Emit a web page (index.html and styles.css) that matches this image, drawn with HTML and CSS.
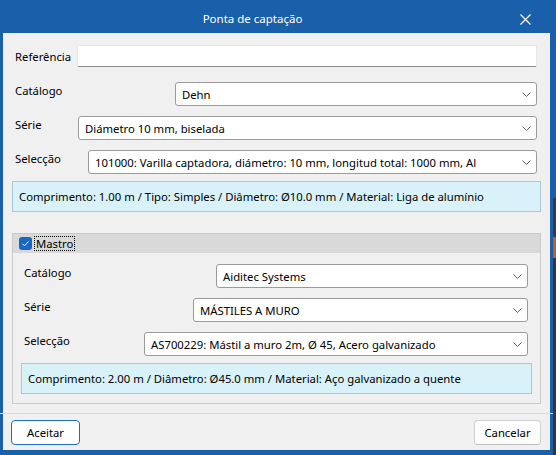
FILE: index.html
```html
<!DOCTYPE html>
<html lang="pt">

<head>
    <meta charset="UTF-8">
    <title>Ponta de captação</title>
    <link rel="stylesheet" href="styles.css">
</head>

<body>
    <div class="window">
        <div class="titlebar">
            <div class="title">Ponta de captação</div>
            <div class="close">
                <svg width="11" height="11" viewBox="0 0 11 11"><path d="M0.5 0.5 L10.5 10.5 M10.5 0.5 L0.5 10.5" stroke="#fff" stroke-width="1.2" fill="none" /></svg>
            </div>
        </div>

        <div class="content">
            <div class="row row-ref">
                <span class="lbl">Referência</span>
                <div class="textbox"></div>
            </div>

            <div class="row">
                <span class="lbl">Catálogo</span>
                <div class="combo" style="width: 362px">
                    <span>Dehn</span>
                    <svg class="chev" width="9" height="5" viewBox="0 0 9 5"><path d="M0.5 0.5 L4.5 4.5 L8.5 0.5" /></svg>
                </div>
            </div>
            <div class="row">
                <span class="lbl">Série</span>
                <div class="combo" style="width: 459px">
                    <span>Diámetro 10 mm, biselada</span>
                    <svg class="chev" width="9" height="5" viewBox="0 0 9 5"><path d="M0.5 0.5 L4.5 4.5 L8.5 0.5" /></svg>
                </div>
            </div>
            <div class="row">
                <span class="lbl">Selecção</span>
                <div class="combo" style="width: 449px">
                    <span>101000: Varilla captadora, diámetro: 10 mm, longitud total: 1000 mm, Al</span>
                    <svg class="chev" width="9" height="5" viewBox="0 0 9 5"><path d="M0.5 0.5 L4.5 4.5 L8.5 0.5" /></svg>
                </div>
            </div>

            <div class="info">Comprimento: 1.00 m / Tipo: Simples / Diâmetro: Ø10.0 mm / Material: Liga de alumínio</div>

            <!-- grupo do mastro -->
            <div class="group">
                <div class="group-head">
                    <span class="check">
                        <svg width="13" height="13" viewBox="0 0 13 13"><path d="M3.5 6.8 L5.5 8.8 L9.6 4.4" stroke="#fff" stroke-width="1" fill="none" /></svg>
                    </span>
                    <span class="focus">Mastro</span>
                </div>
                <div class="group-body">
                    <div class="row">
                        <span class="lbl">Catálogo</span>
                        <div class="combo" style="width: 312px">
                            <span>Aiditec Systems</span>
                            <svg class="chev" width="9" height="5" viewBox="0 0 9 5"><path d="M0.5 0.5 L4.5 4.5 L8.5 0.5" /></svg>
                        </div>
                    </div>
                    <div class="row">
                        <span class="lbl">Série</span>
                        <div class="combo" style="width: 335px">
                            <span>MÁSTILES A MURO</span>
                            <svg class="chev" width="9" height="5" viewBox="0 0 9 5"><path d="M0.5 0.5 L4.5 4.5 L8.5 0.5" /></svg>
                        </div>
                    </div>
                    <div class="row">
                        <span class="lbl">Selecção</span>
                        <div class="combo" style="width: 384px">
                            <span>AS700229: Mástil a muro 2m, Ø 45, Acero galvanizado</span>
                            <svg class="chev" width="9" height="5" viewBox="0 0 9 5"><path d="M0.5 0.5 L4.5 4.5 L8.5 0.5" /></svg>
                        </div>
                    </div>
                    <div class="info">Comprimento: 2.00 m / Diâmetro: Ø45.0 mm / Material: Aço galvanizado a quente</div>
                </div>
            </div>
        </div>

        <div class="footer">
            <button class="btn btn-default">Aceitar</button>
            <button class="btn">Cancelar</button>
        </div>
    </div>
</body>

</html>
```
FILE: styles.css
```css
body {
    margin: 0;
    width: 556px;
    height: 455px;
    overflow: hidden;
    font-family: "Noto Sans", "Open Sans", sans-serif;
    font-size: 11.3px;
    color: #000;
    background: linear-gradient(#1d5ea6 0, #1d5ea6 198px, #3a3a3a 198px, #3a3a3a 237px, #c4592a 237px, #c4592a 258px, #353535 258px);
}

.window {
    width: 547px;
    height: 450px;
    background-color: #f0f0f0;
    border-left: 3px solid #1a5faa;
    border-right: 3px solid #1a5faa;
    border-bottom: 5px solid #1a5faa;
    display: flex;
    flex-direction: column;
}

.titlebar {
    height: 33px;
    margin-left: -3px;
    margin-right: -3px;
    background-color: #1a5faa;
    color: #fff;
    display: flex;
    font-size: 11.5px;
}

.title {
    flex: 1;
    text-align: center;
    line-height: 28px;
    padding-top: 5px;
    padding-left: 3px;
}

.close {
    width: 46px;
    padding-right: 5px;
    display: flex;
    align-items: center;
    justify-content: center;
    padding-top: 6px;
}

.content {
    padding: 0 9px;
}

.row {
    display: flex;
    justify-content: space-between;
    align-items: flex-start;
    margin-top: 10px;
}

.row-ref {
    margin-top: 12px;
    align-items: center;
}

.row-ref + .row {
    margin-top: 15px;
}

.lbl {
    padding-left: 3px;
    line-height: 18px;
}

.row-ref .lbl {
    line-height: 21px;
}

.textbox {
    width: 458px;
    height: 20px;
    margin-right: 4px;
    background-color: #fff;
    border: 1px solid #e6e6e6;
    border-bottom-color: #8a8a8a;
    border-radius: 2px;
}

.combo {
    box-sizing: border-box;
    height: 24px;
    margin-right: 4px;
    background-color: #fff;
    border: 1px solid #9a9a9a;
    border-radius: 3px;
    display: flex;
    align-items: center;
    justify-content: space-between;
    padding: 0 5px 0 6px;
    white-space: nowrap;
}

.chev path {
    fill: none;
    stroke: #5d5d5d;
    stroke-width: 1;
}

.info {
    box-sizing: border-box;
    height: 31px;
    margin-top: 7px;
    padding-left: 6px;
    line-height: 29px;
    background-color: #d9f2f9;
    border: 1px solid #a7cad6;
    white-space: nowrap;
}

.group {
    margin-top: 21px;
    border: 1px solid #cacaca;
}

.group-head {
    height: 19px;
    background-color: #d9d9d9;
    display: flex;
    align-items: center;
    padding-left: 6px;
}

.check {
    width: 13px;
    height: 13px;
    border-radius: 3px;
    background-color: #1967c0;
    display: flex;
}

.focus {
    margin-left: 2px;
    padding: 0 1px;
    line-height: 13px;
    border: 1px dotted #000;
}

.group-body {
    padding: 1px 8px 9px;
}

.footer {
    margin-top: 9px;
    margin-left: -3px;
    margin-right: -3px;
    border-top: 1px solid #dcdcdc;
    padding: 6px 12px 6px 11px;
    display: flex;
    justify-content: space-between;
}

.btn {
    box-sizing: border-box;
    height: 25px;
    width: 67px;
    font-family: inherit;
    font-size: 11.3px;
    color: #000;
    background-color: #fdfdfd;
    border: 1px solid #d0d0d0;
    border-bottom-color: #bdbdbd;
    border-radius: 4px;
    padding: 0;
}

.btn-default {
    width: 69px;
    background-color: #fff;
    border: 1px solid #1a6cc4;
}
```
